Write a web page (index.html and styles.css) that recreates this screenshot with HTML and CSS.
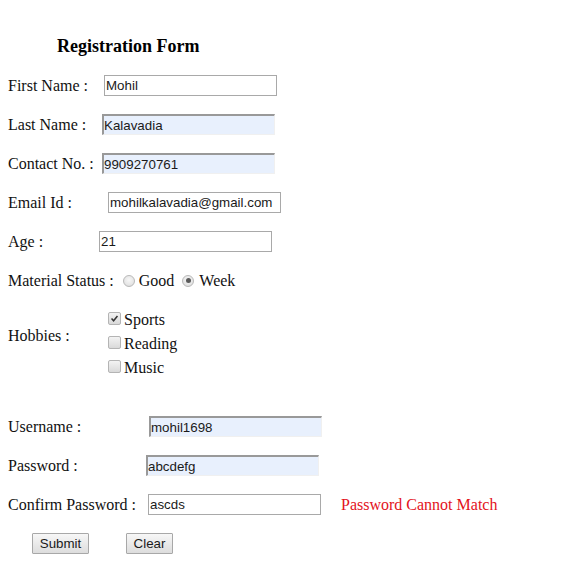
FILE: index.html
```html
<!DOCTYPE html>
<html>
<head>
<meta charset="utf-8">
<title>Registration Form</title>
<link rel="stylesheet" href="styles.css">
</head>
<body>
<form class="form">
  <h3 class="title">Registration Form</h3>

  <div class="row">
    <label class="lbl lbl-first">First Name :</label>
    <input class="txt" type="text" value="Mohil">
  </div>
  <div class="row">
    <label class="lbl lbl-last">Last Name :</label>
    <input class="txt txt-filled" type="text" value="Kalavadia">
  </div>
  <div class="row">
    <label class="lbl lbl-last">Contact No. :</label>
    <input class="txt txt-filled" type="text" value="9909270761">
  </div>
  <div class="row">
    <label class="lbl lbl-email">Email Id :</label>
    <input class="txt" type="text" value="mohilkalavadia@gmail.com">
  </div>
  <div class="row">
    <label class="lbl lbl-age">Age :</label>
    <input class="txt" type="text" value="21">
  </div>

  <div class="row">
    <span class="lbl">Material Status :</span>
    <span class="radio radio-first"></span><span class="opt">Good</span>
    <span class="radio radio-second checked"></span><span class="opt">Week</span>
  </div>

  <div class="row row-hobbies">
    <span class="lbl lbl-hobbies">Hobbies :</span>
    <div class="checks">
      <div class="check-line"><span class="box checked"><svg viewBox="0 0 13 13" width="13" height="13"><path d="M3 6.6 L5.4 9.2 L10 3.6" fill="none" stroke="#333" stroke-width="1.8"/></svg></span><span>Sports</span></div>
      <div class="check-line"><span class="box"></span><span>Reading</span></div>
      <div class="check-line"><span class="box"></span><span>Music</span></div>
    </div>
  </div>

  <div class="row row-after">
    <label class="lbl lbl-user">Username :</label>
    <input class="txt txt-filled" type="text" value="mohil1698">
  </div>
  <div class="row">
    <label class="lbl lbl-pass">Password :</label>
    <input class="txt txt-filled" type="text" value="abcdefg">
  </div>
  <div class="row">
    <label class="lbl lbl-confirm">Confirm Password :</label>
    <input class="txt" type="text" value="ascds">
    <span class="error">Password Cannot Match</span>
  </div>

  <div class="row row-buttons">
    <button type="button" class="btn btn-submit">Submit</button>
    <button type="button" class="btn btn-clear">Clear</button>
  </div>
</form>
</body>
</html>
```

FILE: styles.css
```css
html, body {
  margin: 0;
  padding: 0;
  background: #ffffff;
}

body {
  font-family: "Liberation Serif", "Times New Roman", serif;
  font-size: 16px;
  color: #111111;
}

.form {
  display: flex;
  flex-direction: column;
  padding: 36px 8px 0 8px;
}

.title {
  margin: 0;
  padding-left: 49px;
  font-size: 18px;
  line-height: 21px;
  font-weight: bold;
  color: #000;
}

.row {
  display: flex;
  align-items: center;
  height: 21px;
  margin-top: 18px;
  white-space: nowrap;
}

.lbl {
  flex: 0 0 auto;
}

.lbl-first { width: 96px; }
.lbl-last { width: 94px; }
.lbl-email { width: 100px; }
.lbl-age { width: 91px; }
.lbl-user { width: 141px; }
.lbl-pass { width: 138px; }
.lbl-confirm { width: 140px; }

.txt {
  box-sizing: border-box;
  width: 173px;
  height: 21px;
  margin: 0;
  padding: 0 1px;
  border: 1px solid #a9a9a9;
  background: #ffffff;
  font-family: "Liberation Sans", Arial, sans-serif;
  font-size: 13.33px;
  color: #1a1a1a;
  outline: none;
}

.txt-filled {
  background: #e8f0fd;
  border-top: 2px solid #999999;
  border-left: 2px solid #999999;
  border-right: 1px solid #f0f0f0;
  border-bottom: 1px solid #f0f0f0;
  padding-left: 0;
}

.radio {
  box-sizing: border-box;
  width: 12px;
  height: 12px;
  border-radius: 50%;
  border: 1px solid #b9b9b9;
  background: radial-gradient(circle at 50% 40%, #f7f7f7 0%, #e6e6e6 60%, #d4d4d4 100%);
  position: relative;
  flex: 0 0 auto;
}

.radio.checked::after {
  content: "";
  position: absolute;
  left: 2.5px;
  top: 2.5px;
  width: 5px;
  height: 5px;
  border-radius: 50%;
  background: #5a5a5a;
}

.radio-first {
  margin-left: 9px;
  margin-right: 4px;
}

.radio-second {
  margin-left: 8px;
  margin-right: 5px;
}

.row-hobbies {
  height: auto;
  align-items: flex-start;
  margin-top: 17px;
}

.lbl-hobbies {
  width: 100px;
  padding-top: 19px;
}

.checks {
  display: flex;
  flex-direction: column;
}

.check-line {
  display: flex;
  align-items: center;
  height: 24px;
}

.box {
  box-sizing: border-box;
  width: 13px;
  height: 13px;
  margin-right: 3px;
  margin-bottom: 4px;
  border: 1px solid #b4b4b4;
  border-radius: 2px;
  background: linear-gradient(#f3f3f3, #d9d9d9);
  display: flex;
  align-items: center;
  justify-content: center;
  flex: 0 0 auto;
}

.box svg {
  display: block;
  width: 11px;
  height: 11px;
}

.row-after {
  margin-top: 36px;
}

.error {
  margin-left: 20px;
  color: #e3121c;
}

.row-buttons {
  padding-left: 24px;
}

.btn {
  box-sizing: border-box;
  height: 21px;
  margin: 0;
  padding: 0;
  border: 1px solid #a8a8a8;
  border-radius: 1px;
  background: linear-gradient(#f7f7f7, #dddddd);
  font-family: "Liberation Sans", Arial, sans-serif;
  font-size: 13.33px;
  color: #1a1a1a;
}

.btn-submit { width: 57px; }
.btn-clear { width: 47px; margin-left: 37px; }
```
